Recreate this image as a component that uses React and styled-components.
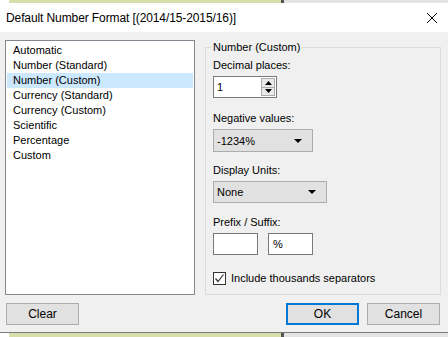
import styled, { createGlobalStyle } from 'styled-components';

const Global = createGlobalStyle`
    html, body {
        margin: 0;
        padding: 0;
        background: #fff;
    }
    body {
        font-family: "Liberation Sans", Arial, sans-serif;
        font-size: 11px;
        color: #000;
    }
`;

const formats = [
    'Automatic',
    'Number (Standard)',
    'Number (Custom)',
    'Currency (Standard)',
    'Currency (Custom)',
    'Scientific',
    'Percentage',
    'Custom',
];

const DownArrow = () => (
    <Arrow width="8" height="4" viewBox="0 0 8 4"><path d="M0 0 L8 0 L4 4 Z" fill="#000" /></Arrow>
);

const App = () => {
    return (
        <>
            <Global />
            <Screen>
                <Backdrop $height={3} />
                <Dialog>
                    <TitleBar>
                        <Title>Default Number Format [(2014/15-2015/16)]</Title>
                        <CloseIcon width="12" height="12" viewBox="0 0 12 12">
                            <path d="M1 1 L11 11 M11 1 L1 11" stroke="#000" strokeWidth="1" fill="none" />
                        </CloseIcon>
                    </TitleBar>
                    <Body>
                        <ListBox>
                            {formats.map((f) => (
                                <ListItem key={f} $selected={f === 'Number (Custom)'}>{f}</ListItem>
                            ))}
                        </ListBox>
                        <Group>
                            <Legend>Number (Custom)</Legend>
                            <Label $top={0}>Decimal places:</Label>
                            <SpinBox>
                                <span>1</span>
                                <Spinner>
                                    <SpinButton>
                                        <svg width="7" height="4" viewBox="0 0 7 4"><path d="M0 4 L3.5 0 L7 4 Z" fill="#000" /></svg>
                                    </SpinButton>
                                    <SpinButton>
                                        <svg width="7" height="4" viewBox="0 0 7 4"><path d="M0 0 L3.5 4 L7 0 Z" fill="#000" /></svg>
                                    </SpinButton>
                                </Spinner>
                            </SpinBox>
                            <Label $top={13}>Negative values:</Label>
                            <Select $width={100} $height={23}>
                                <span>-1234%</span>
                                <DownArrow />
                            </Select>
                            <Label $top={11}>Display Units:</Label>
                            <Select $width={114} $height={22}>
                                <span>None</span>
                                <DownArrow />
                            </Select>
                            <Label $top={12}>Prefix / Suffix:</Label>
                            <InputRow>
                                <TextBox />
                                <TextBox>%</TextBox>
                            </InputRow>
                            <CheckRow>
                                <CheckBox>
                                    <svg width="11" height="11" viewBox="0 0 11 11">
                                        <path d="M1.5 5.5 L4 8.5 L9.5 1.5" stroke="#333" strokeWidth="1.2" fill="none" />
                                    </svg>
                                </CheckBox>
                                Include thousands separators
                            </CheckRow>
                        </Group>
                    </Body>
                    <Footer>
                        <Button>Clear</Button>
                        <Spacer />
                        <Button $primary>OK</Button>
                        <Button>Cancel</Button>
                    </Footer>
                </Dialog>
                <Backdrop />
            </Screen>
        </>
    );
};
export default App;

const Screen = styled.div`
    width: 448px;
    height: 337px;
    overflow: hidden;
    display: flex;
    flex-direction: column;
`;
const Backdrop = styled.div`
    flex: ${(p) => (p.$height ? 'none' : '1')};
    height: ${(p) => (p.$height ? `${p.$height}px` : 'auto')};
    min-height: 0;
    background: linear-gradient(to right, #fff 0 9px, #d8deab 9px 281px, #555 281px 284px, #e3e3e3 284px);
`;
const Dialog = styled.div`
    height: 329px;
    flex: none;
    background: #f0f0f0;
    border-bottom: 1px solid #7a7a7a;
    display: flex;
    flex-direction: column;
`;
const TitleBar = styled.div`
    height: 29px;
    background: #fff;
    display: flex;
    align-items: center;
    padding: 0 10px 0 6px;
`;
const Title = styled.div`
    flex: 1;
    font-size: 12px;
    letter-spacing: -0.1px;
`;
const CloseIcon = styled.svg`
    display: block;
`;
const Body = styled.div`
    display: grid;
    grid-template-columns: 190px 236px;
    gap: 10px;
    padding: 8px 0 0 5px;
    align-items: start;
`;
const ListBox = styled.div`
    height: 255px;
    box-sizing: border-box;
    background: #fff;
    border: 1px solid #828790;
    padding: 2px 1px;
`;
const ListItem = styled.div`
    height: 15px;
    line-height: 15px;
    padding-left: 6px;
    background: ${(p) => (p.$selected ? '#cce8ff' : 'transparent')};
`;
const Group = styled.div`
    position: relative;
    margin-top: 7px;
    height: 248px;
    box-sizing: border-box;
    border: 1px solid #dcdcdc;
    padding: 10px 7px 0;
    display: flex;
    flex-direction: column;
    align-items: flex-start;
`;
const Legend = styled.div`
    position: absolute;
    top: -8px;
    left: 5px;
    padding: 0 2px;
    line-height: 14px;
    background: #f0f0f0;
`;
const Label = styled.div`
    margin-top: ${(p) => p.$top}px;
    line-height: 14px;
    margin-bottom: 4px;
`;
const SpinBox = styled.div`
    width: 64px;
    height: 22px;
    box-sizing: border-box;
    background: #fff;
    border: 1px solid #7a7a7a;
    display: flex;
    align-items: center;
    justify-content: space-between;
    padding: 1px 1px 1px 3px;
`;
const Spinner = styled.div`
    width: 14px;
    height: 18px;
    border: 1px solid #adadad;
    box-sizing: border-box;
    display: flex;
    flex-direction: column;
    background: #e9e9e9;
`;
const SpinButton = styled.div`
    flex: 1;
    display: flex;
    align-items: center;
    justify-content: center;
    & + & {
        border-top: 1px solid #adadad;
    }
`;
const Select = styled.div`
    width: ${(p) => p.$width}px;
    height: ${(p) => p.$height}px;
    box-sizing: border-box;
    background: #e1e1e1;
    border: 1px solid #adadad;
    display: flex;
    align-items: center;
    justify-content: space-between;
    padding: 0 10px 0 3px;
`;
const Arrow = styled.svg`
    display: block;
`;
const InputRow = styled.div`
    display: flex;
    gap: 10px;
`;
const TextBox = styled.div`
    width: 45px;
    height: 22px;
    box-sizing: border-box;
    background: #fff;
    border: 1px solid #7a7a7a;
    line-height: 20px;
    padding-left: 4px;
`;
const CheckRow = styled.div`
    margin-top: 16px;
    display: flex;
    align-items: center;
    gap: 5px;
    line-height: 14px;
`;
const CheckBox = styled.div`
    width: 13px;
    height: 13px;
    box-sizing: border-box;
    border: 1px solid #333;
    background: #fff;
    display: flex;
    align-items: center;
    justify-content: center;
`;
const Footer = styled.div`
    display: flex;
    gap: 8px;
    padding: 8px 8px 0 6px;
`;
const Spacer = styled.div`
    flex: 1;
`;
const Button = styled.div`
    width: 73px;
    height: 22px;
    box-sizing: border-box;
    background: #e1e1e1;
    border: ${(p) => (p.$primary ? '2px solid #0078d7' : '1px solid #adadad')};
    display: flex;
    align-items: center;
    justify-content: center;
    font-size: 12px;
`;
